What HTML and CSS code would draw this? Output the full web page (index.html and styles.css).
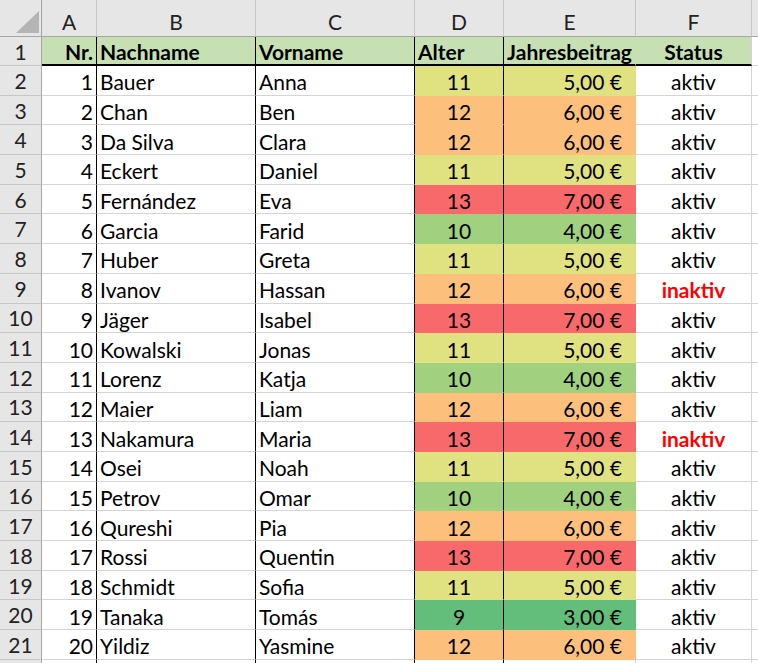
FILE: index.html
```html
<!DOCTYPE html>
<html lang="de">
<head>
<meta charset="utf-8">
<title>Mitglieder</title>
<link rel="stylesheet" href="styles.css">
</head>
<body>
<div class="sheet">
  <div class="ch corner"><svg width="41" height="36" viewBox="0 0 41 36"><polygon points="39,11 39,33 16,33" fill="#b4b4b4"/></svg></div>
  <div class="ch">A</div><div class="ch">B</div><div class="ch">C</div><div class="ch">D</div><div class="ch">E</div><div class="ch">F</div><div class="ch g"></div>

  <div class="rh">1</div>
  <div class="hd n bA">Nr.</div><div class="hd t bA">Nachname</div><div class="hd t bA">Vorname</div><div class="hd t bA">Alter</div><div class="hd ctr noR">Jahresbeitrag</div><div class="hd ctr">Status</div><div class="c g"></div>

  <div class="rh">2</div><div class="c n bA">1</div><div class="c t bA">Bauer</div><div class="c t bA">Anna</div><div class="c d bA a11">11</div><div class="c e a11">5,00 €</div><div class="c s">aktiv</div><div class="c g"></div>
  <div class="rh">3</div><div class="c n bA">2</div><div class="c t bA">Chan</div><div class="c t bA">Ben</div><div class="c d bA a12">12</div><div class="c e a12">6,00 €</div><div class="c s">aktiv</div><div class="c g"></div>
  <div class="rh">4</div><div class="c n bA">3</div><div class="c t bA">Da Silva</div><div class="c t bA">Clara</div><div class="c d bA a12">12</div><div class="c e a12">6,00 €</div><div class="c s">aktiv</div><div class="c g"></div>
  <div class="rh">5</div><div class="c n bA">4</div><div class="c t bA">Eckert</div><div class="c t bA">Daniel</div><div class="c d bA a11">11</div><div class="c e a11">5,00 €</div><div class="c s">aktiv</div><div class="c g"></div>
  <div class="rh">6</div><div class="c n bA">5</div><div class="c t bA">Fernández</div><div class="c t bA">Eva</div><div class="c d bA a13">13</div><div class="c e a13">7,00 €</div><div class="c s">aktiv</div><div class="c g"></div>
  <div class="rh">7</div><div class="c n bA">6</div><div class="c t bA">Garcia</div><div class="c t bA">Farid</div><div class="c d bA a10">10</div><div class="c e a10">4,00 €</div><div class="c s">aktiv</div><div class="c g"></div>
  <div class="rh">8</div><div class="c n bA">7</div><div class="c t bA">Huber</div><div class="c t bA">Greta</div><div class="c d bA a11">11</div><div class="c e a11">5,00 €</div><div class="c s">aktiv</div><div class="c g"></div>
  <div class="rh">9</div><div class="c n bA">8</div><div class="c t bA">Ivanov</div><div class="c t bA">Hassan</div><div class="c d bA a12">12</div><div class="c e a12">6,00 €</div><div class="c s off">inaktiv</div><div class="c g"></div>
  <div class="rh">10</div><div class="c n bA">9</div><div class="c t bA">Jäger</div><div class="c t bA">Isabel</div><div class="c d bA a13">13</div><div class="c e a13">7,00 €</div><div class="c s">aktiv</div><div class="c g"></div>
  <div class="rh">11</div><div class="c n bA">10</div><div class="c t bA">Kowalski</div><div class="c t bA">Jonas</div><div class="c d bA a11">11</div><div class="c e a11">5,00 €</div><div class="c s">aktiv</div><div class="c g"></div>
  <div class="rh">12</div><div class="c n bA">11</div><div class="c t bA">Lorenz</div><div class="c t bA">Katja</div><div class="c d bA a10">10</div><div class="c e a10">4,00 €</div><div class="c s">aktiv</div><div class="c g"></div>
  <div class="rh">13</div><div class="c n bA">12</div><div class="c t bA">Maier</div><div class="c t bA">Liam</div><div class="c d bA a12">12</div><div class="c e a12">6,00 €</div><div class="c s">aktiv</div><div class="c g"></div>
  <div class="rh">14</div><div class="c n bA">13</div><div class="c t bA">Nakamura</div><div class="c t bA">Maria</div><div class="c d bA a13">13</div><div class="c e a13">7,00 €</div><div class="c s off">inaktiv</div><div class="c g"></div>
  <div class="rh">15</div><div class="c n bA">14</div><div class="c t bA">Osei</div><div class="c t bA">Noah</div><div class="c d bA a11">11</div><div class="c e a11">5,00 €</div><div class="c s">aktiv</div><div class="c g"></div>
  <div class="rh">16</div><div class="c n bA">15</div><div class="c t bA">Petrov</div><div class="c t bA">Omar</div><div class="c d bA a10">10</div><div class="c e a10">4,00 €</div><div class="c s">aktiv</div><div class="c g"></div>
  <div class="rh">17</div><div class="c n bA">16</div><div class="c t bA">Qureshi</div><div class="c t bA">Pia</div><div class="c d bA a12">12</div><div class="c e a12">6,00 €</div><div class="c s">aktiv</div><div class="c g"></div>
  <div class="rh">18</div><div class="c n bA">17</div><div class="c t bA">Rossi</div><div class="c t bA">Quentin</div><div class="c d bA a13">13</div><div class="c e a13">7,00 €</div><div class="c s">aktiv</div><div class="c g"></div>
  <div class="rh">19</div><div class="c n bA">18</div><div class="c t bA">Schmidt</div><div class="c t bA">Sofia</div><div class="c d bA a11">11</div><div class="c e a11">5,00 €</div><div class="c s">aktiv</div><div class="c g"></div>
  <div class="rh">20</div><div class="c n bA">19</div><div class="c t bA">Tanaka</div><div class="c t bA">Tomás</div><div class="c d bA a9">9</div><div class="c e a9">3,00 €</div><div class="c s">aktiv</div><div class="c g"></div>
  <div class="rh">21</div><div class="c n bA">20</div><div class="c t bA">Yildiz</div><div class="c t bA">Yasmine</div><div class="c d bA a12">12</div><div class="c e a12">6,00 €</div><div class="c s">aktiv</div><div class="c g"></div>
  <div class="rh"></div><div class="c bA"></div><div class="c bA"></div><div class="c bA"></div><div class="c bA"></div><div class="c"></div><div class="c"></div><div class="c g"></div>
</div>
</body>
</html>
```
FILE: styles.css
```css
html, body {
  margin: 0;
  padding: 0;
  background: #ffffff;
  overflow: hidden;
}
.sheet {
  display: grid;
  grid-template-columns: 42px 55px 159px 159px 89px 132px 116px 1fr;
  grid-template-rows: 37px 29px repeat(20, 29.7px) 30px;
  width: 758px;
  font-family: Lato, "Open Sans", sans-serif;
  font-size: 21px;
  color: #000;
}
.sheet > div {
  box-sizing: border-box;
  display: flex;
  align-items: center;
  white-space: nowrap;
  overflow: hidden;
  border-right: 1px solid #d4d4d4;
  border-bottom: 1px solid #d4d4d4;
}
.ch {
  background: #e6e6e6;
  justify-content: center;
  padding-top: 7px;
  color: #222;
  border-bottom-color: #a6a6a6 !important;
  border-right-color: #c6c6c6 !important;
}
.corner {
  padding-top: 0 !important;
  align-items: flex-start !important;
  border-right-color: #a6a6a6 !important;
}
.rh {
  background: #e6e6e6;
  justify-content: center;
  color: #222;
  border-right-color: #a6a6a6 !important;
  border-bottom-color: #c6c6c6 !important;
}
.hd {
  background: #c6e0b4;
  font-weight: 700;
  border-bottom: 2px solid #000 !important;
  padding-top: 1px;
}
.hd.noR { border-right-color: #c6e0b4; }
.bA { border-right-color: #000 !important; }
.n { justify-content: flex-end; padding-right: 3px; }
.t { justify-content: flex-start; padding-left: 3px; }
.ctr { justify-content: center; }
.d { justify-content: center; }
.e { justify-content: flex-end; padding-right: 13px; }
.s { justify-content: center; }
.off { color: #ff0000; font-weight: 700; }
.c { padding-top: 3px; }
.a9  { background: #63be7b; border-bottom-color: #63be7b !important; }
.a10 { background: #a1d07f; border-bottom-color: #a1d07f !important; }
.a11 { background: #e0e282; border-bottom-color: #e0e282 !important; }
.a12 { background: #fdc07c; border-bottom-color: #fdc07c !important; }
.a13 { background: #f8696b; border-bottom-color: #f8696b !important; }
.e.a9  { border-right-color: #63be7b; }
.e.a10 { border-right-color: #a1d07f; }
.e.a11 { border-right-color: #e0e282; }
.e.a12 { border-right-color: #fdc07c; }
.e.a13 { border-right-color: #f8696b; }
.g { border-right: none !important; }
```
